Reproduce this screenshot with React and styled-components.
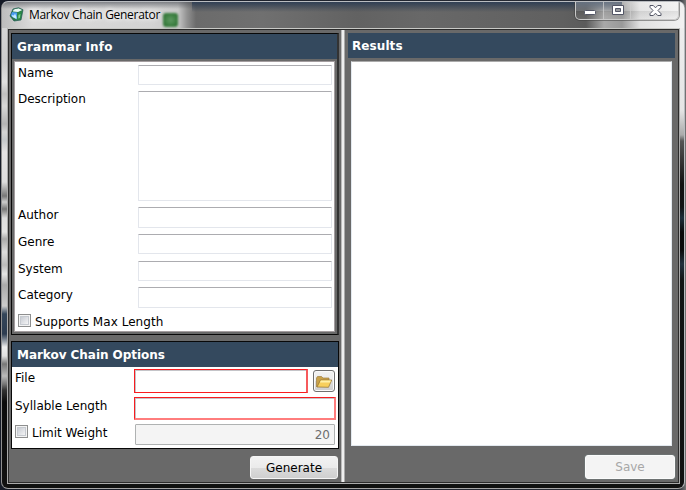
import React from "react";
import styled, { createGlobalStyle, css } from "styled-components";

const Global = createGlobalStyle`
  * { box-sizing: border-box; }
  html, body { margin: 0; padding: 0; overflow: hidden; background: #111; }
  body { font: 12px/16px "DejaVu Sans", Verdana, sans-serif; color: #000; }
  input, textarea, button { font: inherit; margin: 0; outline: none; }
`;

const Desktop = styled.div`
  width: 686px;
  height: 490px;
  padding: 1px 0 0 1px;
  background: linear-gradient(to right, #151a26, #2b2f38 99%, #777 100%);
`;

const WindowFrame = styled.div`
  width: 684px;
  height: 488px;
  display: flex;
  flex-direction: column;
  border: 1px solid #b9bcc0;
  border-left-color: #8f8f8f;
  border-bottom-color: #a5a5a5;
  border-radius: 7px;
  overflow: hidden;
  background:
    linear-gradient(to bottom, #f0f0f0 0, #e5e5e5 108px, #aaa 133px, #555 139px, #333 160px,
      #111 182px, #101314 205px, #1d2e3a 216px, #080a0a 230px, #090a0a 248px, #21313d 262px, #111414 278px, #111 100%)
      right 0 top 0 / 12px 100% no-repeat,
    linear-gradient(to bottom, #ddd 0, #ccc 60px, #e0e0e0 80px, #c0c0c0 92px, #d8d8d8 104px, #b4b4b4 122px,
      #d4d4d4 130px, #c5c8ca 138px, #e5e3e3 150px, #ddd 180px, #777 194px, #ccc 200px, #777 207px, #ddd 216px,
      #e3e3e3 230px, #aaa 237px, #ddd 250px, #bbb 263px, #e5e5e5 272px, #aaa 283px, #ccc 304px,
      #34465a 312px, #2d3c50 332px, #eee 345px, #e0e0e0 354px, #777 362px, #bbb 374px,
      #777 382px, #333 388px, #0b0b0b 400px, #111 100%)
      left 0 top 0 / 12px 100% no-repeat,
    #101110;
`;

const TitleBar = styled.header`
  flex: 0 0 26px;
  display: flex;
  align-items: flex-start;
  padding-left: 7px;
  background:
    linear-gradient(to bottom, rgba(45, 61, 83, .95) 0, rgba(52, 65, 83, .65) 4px, rgba(75, 80, 86, 0) 10px)
      190px 0 / 430px 100% no-repeat,
    linear-gradient(to bottom, rgba(72, 76, 84, .6), rgba(120, 120, 120, 0) 7px) 0 0 / 190px 100% no-repeat,
    linear-gradient(to right, #bdbdbd 0, #dadada 30px, #d3d3d3 150px, #c8c8c8 176px, #929292 185px,
      #6b6b6b 194px, #707070 260px, #626262 355px, #686868 420px, #606060 560px, #5b5b5b 584px,
      #a8a8a8 602px, #999 620px, #e0e0e0 638px, #f1f1f1 680px);
`;

const AppIcon = styled.svg`
  width: 15px;
  height: 15px;
  margin-top: 5px;
`;

const Title = styled.div`
  margin: 4px 0 0 5px;
  font: 12px/17px "Open Sans", "Noto Sans", sans-serif;
  letter-spacing: -0.3px;
  white-space: nowrap;
  text-shadow: 0 0 7px #fff, 0 0 5px #fff;
`;

const GlassReflection = styled.span`
  width: 15px;
  height: 14px;
  margin: 11px 0 0 3px;
  border-radius: 3px;
  background: radial-gradient(#5e9a62, #34793a 70%);
  filter: blur(1.3px);
`;

const WindowControls = styled.div`
  display: flex;
  width: 104px;
  height: 19px;
  margin: -1px 5px 0 auto;
  border: 1px solid #c9c9c9;
  border-top: 0;
  border-radius: 0 0 5px 5px;
  box-shadow: 0 0 0 1px rgba(60, 60, 60, .5);
  overflow: hidden;
`;

const ControlButton = styled.button`
  width: ${({ $width }) => $width}px;
  height: 19px;
  padding: 0;
  border: 0;
  border-right: ${({ $last }) => ($last ? 0 : "1px solid rgba(205,205,205,.75)")};
  background: linear-gradient(rgba(255, 255, 255, .28), rgba(255, 255, 255, .14) 50%, rgba(70, 70, 70, .1) 52%, rgba(255, 255, 255, .08));
  display: flex;
  justify-content: center;
  align-items: flex-start;
  svg { display: block; margin: ${({ $iconTop }) => $iconTop}px 0 0 1px; }
`;

const Client = styled.main`
  width: 673px;
  height: 456px;
  margin-left: 5px;
  display: flex;
  background: #696969;
  border: 1px solid #aaa;
  border-top-color: #c8c9c6;
  box-shadow: inset 0 0 0 1px #2c2c2c;
  padding: 1px 1px 1px 0;
`;

const LeftPane = styled.div`
  width: 333px;
  padding: 3px 3px 0 3px;
  display: flex;
  flex-direction: column;
`;

const Splitter = styled.div`
  width: 4px;
  background: linear-gradient(to right, #bbb 0 1px, #efefef 1px 3px, #aaa 3px);
`;

const RightPane = styled.div`
  flex: 1;
  padding: 3px 3px 0 3px;
  display: flex;
  flex-direction: column;
`;

const Panel = styled.section`
  width: 328px;
  height: ${({ $height }) => $height}px;
  margin-top: ${({ $gap = 0 }) => $gap}px;
  border: 1px solid #080808;
  ${({ $heavy }) => $heavy && css`border-right: 2px solid #333;`}
`;

const PanelHeader = styled.h2`
  height: 25px;
  margin: 0;
  padding: ${({ $top = 4 }) => $top}px 0 0 ${({ $inset = 5 }) => $inset}px;
  background: #34495e;
  color: #fff;
  font: bold 12px/19px "DejaVu Sans", Verdana, sans-serif;
  letter-spacing: ${({ $tracking = 0 }) => $tracking}px;
  white-space: nowrap;
`;

const InfoBody = styled.div`
  width: 321px;
  height: 271px;
  margin: 2px 0 0 2px;
  border: 1px solid #a39d9f;
  background: #fff;
  padding: 3px 2px 0 3px;
`;

const InfoRow = styled.div`
  display: grid;
  grid-template-columns: 120px 194px;
  height: ${({ $height }) => $height}px;
`;

const Label = styled.span`
  line-height: 16px;
  letter-spacing: ${({ $tracking = 0 }) => $tracking}px;
  white-space: nowrap;
`;

const fieldSkin = css`
  display: block;
  padding: 2px;
  background: #fff;
  border: 1px solid #e3e6ec;
  border-top-color: #acacb0;
  border-radius: 1px;
  resize: none;
`;

const Field = styled.input`
  ${fieldSkin}
  width: 194px;
  height: ${({ $height }) => $height}px;
`;

const TextField = styled.textarea`
  ${fieldSkin}
  width: 194px;
  height: 110px;
`;

const CheckRow = styled.label`
  display: flex;
  gap: 4px;
`;

const CheckBox = styled.span`
  width: 13px;
  height: 13px;
  border: 1px solid #8e8f8f;
  background: linear-gradient(135deg, #c8ccd3, #f4f4f5) content-box, #f4f4f4;
  padding: 2px;
  box-shadow: inset 0 0 0 1px #f4f4f4, inset 0 0 0 2px #c6cad0;
`;

const OptionsBody = styled.div`
  height: 81px;
  padding: 2px 2px 0 3px;
  background: #fff;
`;

const OptionRow = styled.div`
  display: flex;
  align-items: flex-start;
  height: ${({ $height }) => $height}px;
`;

const OptionLabel = styled.div`
  width: 119px;
  padding-top: ${({ $top }) => $top}px;
`;

const RequiredField = styled.input`
  width: ${({ $width }) => $width}px;
  height: ${({ $height }) => $height}px;
  padding: 2px;
  border: 1px solid #f81c20;
  border-right: 2px solid ${({ $soft }) => ($soft ? "#ff7d7d" : "#f65a5c")};
  border-bottom: ${({ $soft }) => ($soft ? "2px solid #ff7d7d" : "1px solid #f81c20")};
  box-shadow: inset 1px 1px #c4c4c8;
  background: #fff;
`;

const WeightField = styled.input`
  width: 200px;
  height: 21px;
  margin-left: 1px;
  padding: 1px 4px 0;
  border: 1px solid #afb2b2;
  border-radius: 1px;
  background: #f4f4f4;
  color: #6d6d6d;
  text-align: right;
`;

const BrowseButton = styled.button`
  width: 22px;
  height: 22px;
  margin: 1px 0 0 5px;
  padding: 0;
  border: 1px solid #707070;
  border-radius: 3px;
  background: linear-gradient(#f3f3f3, #ebebeb 50%, #ddd 50%, #cfcfcf);
  box-shadow: inset 0 0 0 1px #fafafa;
  svg { display: block; margin: 1px 0 0 1px; }
`;

const ActionButton = styled.button`
  width: ${({ $width }) => $width}px;
  height: ${({ $height }) => $height}px;
  margin: ${({ $top }) => $top}px 0 0 auto;
  padding: 0;
  border: 1px solid #f5f5f5;
  border-radius: 3px;
  background: linear-gradient(#f2f2f2, #ebebeb 50%, #dcdcdc 50%, #cfcfcf);
  color: #000;
  &:disabled {
    border-color: #fbfcfc;
    box-shadow: 0 0 0 1px rgba(120, 135, 135, .3);
    background: #f4f4f4;
    color: #a7a7a7;
  }
`;

const ResultsBox = styled.textarea`
  width: 321px;
  height: 385px;
  margin: 3px 0 0 3px;
  background: #fff;
  border: 1px solid #e3e9ef;
  border-top-color: #aaa;
  resize: none;
`;

const Generator = () => (
  <Desktop>
    <Global />
    <WindowFrame>
      <TitleBar>
        <AppIcon viewBox="0 0 15 15">
          <path d="M4 2 9.500.700l4.500 2L12 13l-7 1L1 9Z" fill="#2c7a48" />
          <path d="M4.500 2.500 9.500 1.300 13.300 3 9 5 4 4.500Z" fill="#e8f8f4" />
          <path d="m2.300 5 5.900.5-.5 7-5.700-3.500Z" fill="#4a9cf0" />
          <path d="m8.700 5.800 4.500-2-1.900 8.700-3.300.5Z" fill="#2c8a48" />
          <path d="m3 8 2 .5 1-2 1.500 3.500v2l-4-2Z" fill="#c8ecff" />
          <path d="m9.500 8 2-1-.7 4-1.500.5Z" fill="#7fd08d" />
          <path d="M4 2 9.500.700l4.500 2L12 13l-7 1L1 9Z" fill="none" stroke="#215a55" strokeWidth=".7" />
        </AppIcon>
        <Title>Markov Chain Generator</Title>
        <GlassReflection />
        <WindowControls>
          <ControlButton $width={28} $iconTop={9} aria-label="Minimize">
            <svg width="12" height="6"><rect x=".5" y=".5" width="11" height="4" rx="1" fill="#fff" stroke="#535666" /></svg>
          </ControlButton>
          <ControlButton $width={27} $iconTop={4} aria-label="Maximize">
            <svg width="12" height="10"><path d="M.5.5h11v9H.5Zm3 3v3h5v-3Z" fill="#fff" fillRule="evenodd" stroke="#535666" /></svg>
          </ControlButton>
          <ControlButton $width={47} $iconTop={4} $last aria-label="Close">
            <svg width="13" height="11"><path d="M1 .5h3.300l2.200 2.300 2.200-2.300H12v1.800L9 5.500l3 3.200v1.800H8.700L6.500 8.200l-2.200 2.300H1V8.700l3-3.200-3-3.200Z" fill="#fff" stroke="#535666" /></svg>
          </ControlButton>
        </WindowControls>
      </TitleBar>
      <Client>
        <LeftPane>
          <Panel $height={302} $heavy>
            <PanelHeader $tracking={0.17}>Grammar Info</PanelHeader>
            <InfoBody>
              <InfoRow $height={26}><Label>Name</Label><Field $height={20} aria-label="Name" /></InfoRow>
              <InfoRow $height={116}><Label $tracking={-0.06}>Description</Label><TextField aria-label="Description" /></InfoRow>
              <InfoRow $height={27}><Label>Author</Label><Field $height={21} aria-label="Author" /></InfoRow>
              <InfoRow $height={27}><Label>Genre</Label><Field $height={20} aria-label="Genre" /></InfoRow>
              <InfoRow $height={26}><Label>System</Label><Field $height={20} aria-label="System" /></InfoRow>
              <InfoRow $height={27}><Label>Category</Label><Field $height={21} aria-label="Category" /></InfoRow>
              <CheckRow><CheckBox /><Label $tracking={0.04}>Supports Max Length</Label></CheckRow>
            </InfoBody>
          </Panel>
          <Panel $height={108} $gap={6}>
            <PanelHeader $tracking={-0.04}>Markov Chain Options</PanelHeader>
            <OptionsBody>
              <OptionRow $height={28}>
                <OptionLabel $top={1}><Label>File</Label></OptionLabel>
                <RequiredField $width={174} $height={24} aria-label="File" />
                <BrowseButton aria-label="Browse">
                  <svg width="18" height="18" viewBox="0 0 18 18">
                    <path d="M1.500 14V5l1-1.500h4L8 5h6v3" fill="#c9a24a" stroke="#a08040" strokeWidth=".7" />
                    <path d="M2 14 5.500 7h11.300L13.500 14.300Z" fill="#f8cf5c" stroke="#8f7030" strokeWidth=".7" />
                    <path d="M5.800 7.600h10l-.7 1.800H5Z" fill="#fff0a8" />
                  </svg>
                </BrowseButton>
              </OptionRow>
              <OptionRow $height={27}>
                <OptionLabel $top={1}><Label>Syllable Length</Label></OptionLabel>
                <RequiredField $width={202} $height={23} $soft aria-label="Syllable Length" />
              </OptionRow>
              <OptionRow $height={22}>
                <OptionLabel $top={1}><CheckRow><CheckBox /><Label>Limit Weight</Label></CheckRow></OptionLabel>
                <WeightField defaultValue="20" disabled aria-label="Weight" />
              </OptionRow>
            </OptionsBody>
          </Panel>
          <ActionButton $width={88} $height={23} $top={7}>Generate</ActionButton>
        </LeftPane>
        <Splitter />
        <RightPane>
          <PanelHeader $inset={4} $tracking={0.08}>Results</PanelHeader>
          <ResultsBox aria-label="Results" />
          <ActionButton $width={90} $height={24} $top={9} disabled>Save</ActionButton>
        </RightPane>
      </Client>
    </WindowFrame>
  </Desktop>
);

export default Generator;
